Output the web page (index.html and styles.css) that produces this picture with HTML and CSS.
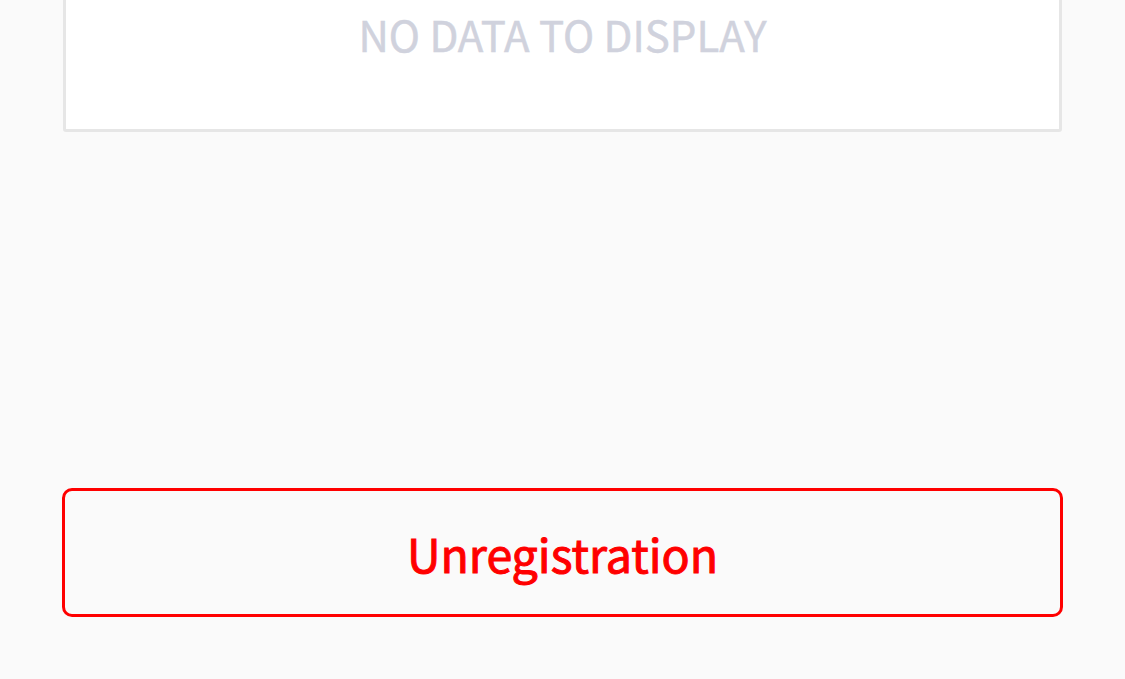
FILE: index.html
```html
<!DOCTYPE html>
<html lang="en">
<head>
    <meta charset="UTF-8">
    <meta name="viewport" content="width=device-width, initial-scale=1.0">
    <title>Device</title>
    <link rel="stylesheet" href="styles.css">
</head>
<body>
    <div class="page">
        <div class="data-box">
            <p class="empty-text">NO DATA TO DISPLAY</p>
        </div>
        <button class="unregister-btn" type="button">Unregistration</button>
    </div>
</body>
</html>
```

FILE: styles.css
```css
body {
    margin: 0;
    background: #fafafa;
    font-family: "Noto Sans CJK JP", "Noto Sans", sans-serif;
}
.page {
    display: flex;
    flex-direction: column;
    padding: 0 62px;
}
.data-box {
    margin: -40px 1px 0 1px;
    padding: 41px 0 65px;
    background: #fff;
    border: 3px solid #e6e6e6;
    border-radius: 3px;
    text-align: center;
}
.empty-text {
    margin: 0;
    font-size: 42px;
    line-height: 60px;
    color: #d0d2dd;
    -webkit-text-stroke: 0.5px #d0d2dd;
}
.unregister-btn {
    margin-top: 356px;
    height: 129px;
    display: flex;
    align-items: center;
    justify-content: center;
    background: transparent;
    border: 3px solid #ff0000;
    border-radius: 10px;
    color: #ff0000;
    font-family: inherit;
    font-size: 46.5px;
    font-weight: 400;
    -webkit-text-stroke: 1px #ff0000;
}
```
